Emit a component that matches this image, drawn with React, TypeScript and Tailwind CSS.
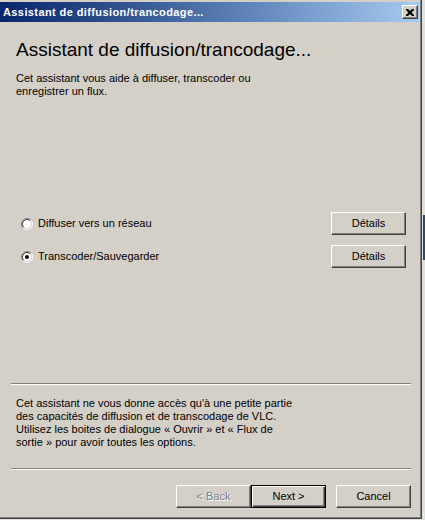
import React from "react";

const raised =
  "border border-t-white border-l-white border-r-[#404040] border-b-[#404040] shadow-[inset_-1px_-1px_0_#808080]";

function Radio({ checked }: { checked?: boolean }) {
  return (
    <svg width="12" height="12" viewBox="0 0 12 12" className="shrink-0">
      <circle cx="6" cy="6" r="5" fill="#fff" />
      <path d="M2.11 9.89 A5.5 5.5 0 0 1 9.89 2.11" fill="none" stroke="#808080" />
      <path d="M9.89 2.11 A5.5 5.5 0 0 1 2.11 9.89" fill="none" stroke="#fff" />
      <path d="M2.82 9.18 A4.5 4.5 0 0 1 9.18 2.82" fill="none" stroke="#404040" />
      <path d="M9.18 2.82 A4.5 4.5 0 0 1 2.82 9.18" fill="none" stroke="#d4d0c8" />
      {checked && <circle cx="6" cy="6" r="2" fill="#000" />}
    </svg>
  );
}

function Button({
  children,
  isDefault,
  disabled,
}: {
  children: React.ReactNode;
  isDefault?: boolean;
  disabled?: boolean;
}) {
  const frame = isDefault
    ? "border border-black shadow-[inset_1px_1px_0_#fff,inset_-1px_-1px_0_#404040,inset_-2px_-2px_0_#808080]"
    : raised;
  return (
    <div
      className={`w-[75px] h-[23px] flex items-center justify-center bg-[#d4d0c8] ${frame} ${
        disabled ? "text-[#808080] [text-shadow:1px_1px_0_#fff]" : "text-black"
      }`}
    >
      {children}
    </div>
  );
}

function Separator() {
  return <div className="ml-[11px] w-[400px] h-[2px] border-t border-t-[#808080] border-b border-b-white" />;
}

export default function App() {
  return (
    <div className="w-[425px] h-[520px] bg-[#e3e1dc] flex overflow-hidden font-['Liberation_Sans',Arial,sans-serif] text-[11px] leading-[13px] text-black">
      {/* dialog window */}
      <div className="w-[422px] h-[519px] shrink-0 bg-[#d4d0c8] pt-[2px] pr-[2px] border-r border-b border-[#404040] shadow-[inset_-1px_-1px_0_#808080] flex flex-col">
        {/* title bar */}
        <div className="h-[20px] bg-gradient-to-r from-[#0a246a] to-[#a6caf0] flex items-center justify-between pl-[3px] pr-[1px]">
          <span className="text-white font-bold text-[11px] tracking-[0.4px] leading-none">
            Assistant de diffusion/trancodage...
          </span>
          <div className={`w-[16px] h-[14px] bg-[#d4d0c8] flex items-center justify-center ${raised}`}>
            <svg width="8" height="7" viewBox="0 0 8 7">
              <path d="M0 0h2l2 2 2-2h2v1l-2.5 2.5 2.5 2.5v1h-2l-2-2-2 2h-2v-1l2.5-2.5-2.5-2.5z" fill="#000" />
            </svg>
          </div>
        </div>

        {/* header */}
        <div className="pl-[16px] mt-[17px]">
          <h1 className="text-[19px] leading-[22px] font-normal">Assistant de diffusion/trancodage...</h1>
          <p className="mt-[11px]">
            Cet assistant vous aide à diffuser, transcoder ou
            <br />
            enregistrer un flux.
          </p>
        </div>

        {/* options */}
        <div className="mt-[114px] flex flex-col gap-[10px] pl-[21px] pr-[13px]">
          <div className="h-[23px] flex items-center justify-between">
            <div className="flex items-center gap-[5px]">
              <Radio />
              <span>Diffuser vers un réseau</span>
            </div>
            <Button>Détails</Button>
          </div>
          <div className="h-[23px] flex items-center justify-between">
            <div className="flex items-center gap-[5px]">
              <Radio checked />
              <span>Transcoder/Sauvegarder</span>
            </div>
            <Button>Détails</Button>
          </div>
        </div>

        <div className="mt-[115px]">
          <Separator />
        </div>

        <p className="mt-[12px] pl-[16px]">
          Cet assistant ne vous donne accès qu'à une petite partie
          <br />
          des capacités de diffusion et de transcodage de VLC.
          <br />
          Utilisez les boites de dialogue « Ouvrir » et « Flux de
          <br />
          sortie » pour avoir toutes les options.
        </p>

        <div className="mt-[19px]">
          <Separator />
        </div>

        {/* footer buttons */}
        <div className="mt-[15px] flex justify-end gap-[10px] pr-[8px]">
          <div className="flex">
            <Button disabled>&lt; Back</Button>
            <Button isDefault>Next &gt;</Button>
          </div>
          <Button>Cancel</Button>
        </div>
      </div>

      {/* sliver of the window behind */}
      <div className="flex-1 flex flex-col">
        <div className="h-[215px]" />
        <div className="h-[45px] ml-[1px] bg-[#2d4a6a]" />
      </div>
    </div>
  );
}
